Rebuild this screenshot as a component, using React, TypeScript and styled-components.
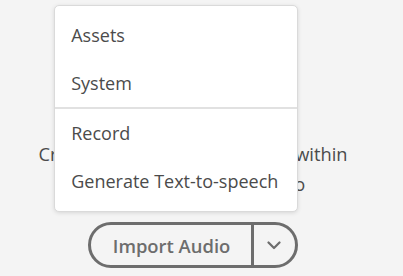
import React from 'react';
import styled, { createGlobalStyle } from 'styled-components';

const GlobalStyle = createGlobalStyle`
  html, body {
    margin: 0;
    padding: 0;
    background: #f4f4f4;
  }
  body {
    font-family: "Open Sans", "Noto Sans", sans-serif;
  }
`;

const Page = styled.div`
  width: 403px;
  height: 276px;
  overflow: hidden;
  background: #f4f4f4;
`;

const Content = styled.div`
  width: 386px;
  display: flex;
  flex-direction: column;
  align-items: center;
  padding-top: 139px;
`;

const Description = styled.p`
  margin: 0;
  font-size: 18.3px;
  line-height: 30px;
  color: #4b4b4b;
  text-align: center;
  white-space: nowrap;
`;

const ButtonGroup = styled.div`
  position: relative;
  display: flex;
  margin-top: 23px;
  height: 46px;
  box-sizing: border-box;
  border: 3px solid #6d6d6d;
  border-radius: 23px;
`;

const MainButton = styled.button`
  border: none;
  background: transparent;
  padding: 0 21px 0 22px;
  font-family: inherit;
  font-size: 18.4px;
  font-weight: 600;
  color: #6d6d6d;
  cursor: pointer;
`;

const ToggleButton = styled.button`
  width: 44px;
  box-sizing: border-box;
  border: none;
  border-left: 3px solid #6d6d6d;
  background: transparent;
  display: flex;
  align-items: center;
  justify-content: center;
  padding: 0 2px 0 0;
  color: #6d6d6d;
  cursor: pointer;
`;

const Menu = styled.ul`
  position: absolute;
  right: -3px;
  bottom: calc(100% + 13px);
  width: 244px;
  margin: 0;
  padding: 5px 0 6px;
  list-style: none;
  background: #ffffff;
  border: 1px solid #dadada;
  border-radius: 5px;
  box-sizing: border-box;
  box-shadow: 0 1px 4px rgba(0, 0, 0, 0.12);
`;

const MenuItem = styled.li`
  height: 48px;
  display: flex;
  align-items: center;
  padding-left: 16px;
  font-size: 18px;
  color: #4b4b4b;
  white-space: nowrap;
`;

const Divider = styled.li`
  height: 2px;
  background: #e1e1e1;
`;

const Chevron = () => (
  <svg width="14" height="9" viewBox="0 0 14 9" fill="none">
    <path d="M1.5 1.5 L7 7 L12.5 1.5" stroke="currentColor" strokeWidth="2.2" strokeLinecap="round" strokeLinejoin="round" />
  </svg>
);

function App() {
  return (
    <Page>
      <GlobalStyle />
      <Content>
        <Description>
          Create or import audio to use within
          <br />
          your projects to add audio
        </Description>
        <ButtonGroup>
          <MainButton>Import Audio</MainButton>
          <ToggleButton aria-label="More options">
            <Chevron />
          </ToggleButton>
          <Menu>
            <MenuItem>Assets</MenuItem>
            <MenuItem>System</MenuItem>
            <Divider />
            <MenuItem>Record</MenuItem>
            <MenuItem>Generate Text-to-speech</MenuItem>
          </Menu>
        </ButtonGroup>
      </Content>
    </Page>
  );
}

export default App;
